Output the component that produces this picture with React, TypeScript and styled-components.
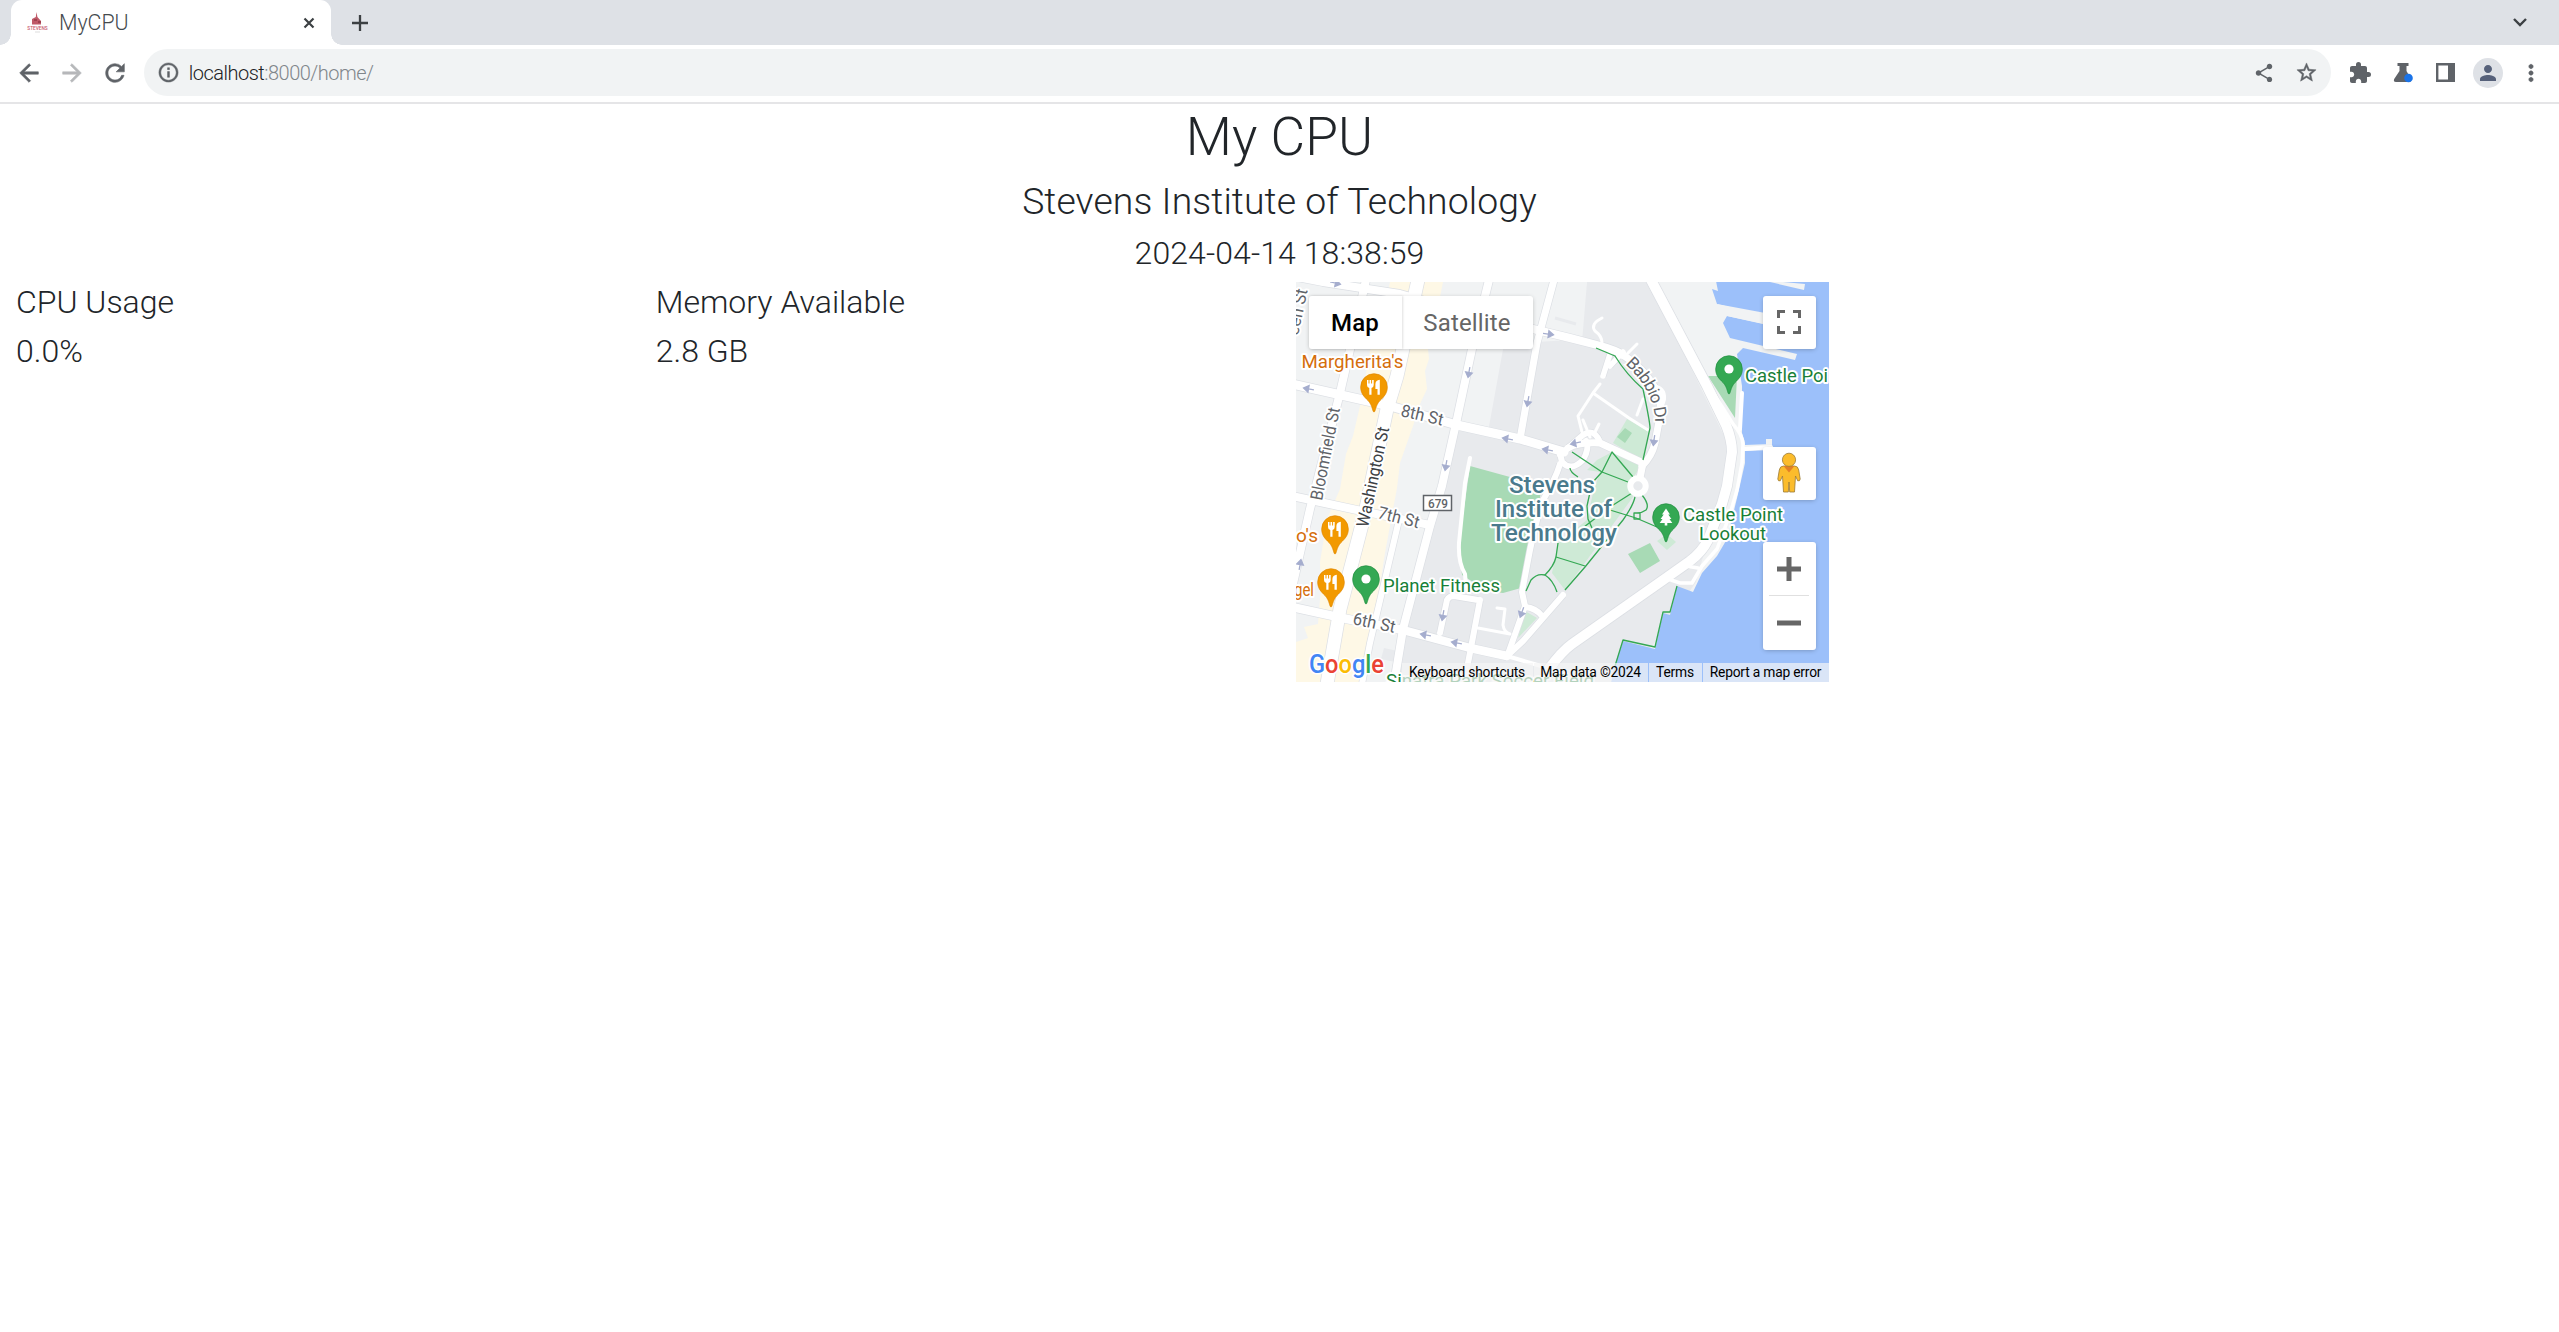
import React from "react";
import styled, { createGlobalStyle } from "styled-components";
import {
  MdArrowBack,
  MdArrowForward,
  MdRefresh,
  MdInfoOutline,
  MdShare,
  MdStarBorder,
  MdExtension,
  MdPerson,
  MdMoreVert,
} from "react-icons/md";

const GlobalStyle = createGlobalStyle`
  *, *::before, *::after { box-sizing: border-box; }
  body {
    margin: 0;
    background: #fff;
    color: #212529;
    font-family: Roboto, "Liberation Sans", sans-serif;
    font-weight: 300;
  }
`;

/* ---------- browser frame ---------- */

const Window = styled.div`
  display: flex;
  flex-direction: column;
  height: 1332px;
  overflow: hidden;
`;

const TabStrip = styled.div`
  display: flex;
  align-items: stretch;
  height: 45px;
  padding-left: 11px;
  background: #dee1e6;
  color: #3c4043;
`;

const Tab = styled.div`
  position: relative;
  display: flex;
  align-items: center;
  width: 320px;
  padding: 0 16px;
  border-radius: 11px 11px 0 0;
  background: #fff;

  &::before,
  &::after {
    content: "";
    position: absolute;
    bottom: 0;
    width: 11px;
    height: 11px;
  }
  &::before {
    left: -11px;
    background: radial-gradient(circle at 0 0, #dee1e6 10.5px, #fff 11px);
  }
  &::after {
    right: -11px;
    background: radial-gradient(circle at 100% 0, #dee1e6 10.5px, #fff 11px);
  }
`;

const TabTitle = styled.span`
  flex: 1;
  margin-left: 11px;
  font-size: 21.33px;
  line-height: 45px;
  color: #45494d;
`;

const StripButton = styled.span<{ $width: number }>`
  display: flex;
  align-items: center;
  justify-content: center;
  width: ${(p) => p.$width}px;
  color: #3c4043;
`;

const Spacer = styled.span`
  flex: 1;
`;

const Toolbar = styled.div`
  display: flex;
  align-items: center;
  height: 59px;
  padding: 0 7px 2px 8px;
  border-bottom: 2px solid #e5e5e7;
  color: #5f6368;
`;

const ToolButton = styled.span<{ $faded?: boolean; $bold?: boolean }>`
  display: flex;
  align-items: center;
  justify-content: center;
  width: 42.7px;
  flex: none;
  opacity: ${(p) => (p.$faded ? 0.45 : 1)};

  > svg path {
    stroke-width: 0;
  }
  > svg path:not([fill="none"]) {
    stroke-width: ${(p) => (p.$bold ? 0.5 : 0)};
  }
`;

const AddressBar = styled.div`
  display: flex;
  align-items: center;
  flex: 1;
  height: 47px;
  margin: 0 8px 0 8px;
  padding: 0 3px;
  border-radius: 24px;
  background: #f1f3f4;
`;

const Address = styled.span`
  flex: 1;
  margin-left: -1px;
  font-size: 20px;
  letter-spacing: -0.5px;
  color: #80868b;

  b {
    font-weight: 300;
    color: #202124;
  }
`;

const Avatar = styled.span`
  display: flex;
  align-items: center;
  justify-content: center;
  width: 30px;
  height: 30px;
  border-radius: 50%;
  background: #dee1e6;
  color: #56617a;
`;

/* ---------- page ---------- */

const Page = styled.main`
  flex: 1;
`;

const Header = styled.header`
  display: flex;
  flex-direction: column;
  align-items: center;
  padding-top: 2px;
  letter-spacing: 0.09px;
`;

const Heading = styled.h1<{ $size: number; $gap?: number }>`
  margin: 0 0 ${(p) => p.$gap ?? 10.67}px;
  font-size: ${(p) => p.$size}px;
  font-weight: 300;
  line-height: 1.2;
`;

const Columns = styled.section`
  display: grid;
  grid-template-columns: repeat(4, 1fr);
`;

const Column = styled.div`
  padding: 0 16px;
`;

/* ---------- map ---------- */

const MapFrame = styled.div`
  position: relative;
  width: 533px;
  height: 400px;
  margin-top: -1.6px;
  overflow: hidden;
  background: #f1f3f4;

  > svg {
    display: block;
  }
`;

const Control = styled.div`
  position: absolute;
  display: flex;
  background: #fff;
  border-radius: 3px;
  box-shadow: 0 1px 5px -1px rgba(0, 0, 0, 0.3);
`;

const MapTypes = styled(Control)`
  left: 13px;
  top: 14px;
  height: 53px;
`;

const MapType = styled.span<{ $active?: boolean }>`
  display: flex;
  align-items: center;
  justify-content: center;
  width: ${(p) => (p.$active ? 93 : 131)}px;
  padding-top: 2px;
  font-size: 24px;
  letter-spacing: 0.15px;
  font-weight: ${(p) => (p.$active ? 500 : 400)};
  color: ${(p) => (p.$active ? "#000" : "#666")};
  box-shadow: ${(p) => (p.$active ? "1px 0 2px rgba(0,0,0,.12)" : "none")};
`;

const SideControl = styled(Control)<{ $top: number; $height?: number }>`
  right: 13px;
  top: ${(p) => p.$top}px;
  width: 53px;
  height: ${(p) => p.$height ?? 53}px;
  flex-direction: column;
  align-items: center;
  justify-content: center;
`;

const ZoomHalf = styled.span`
  display: flex;
  flex: 1;
  align-items: center;
  justify-content: center;
`;

const Rule = styled.span`
  width: 40px;
  height: 1px;
  background: #e0e0e0;
`;

const Credits = styled.div`
  position: absolute;
  right: 0;
  bottom: 0;
  display: flex;
  gap: 1px;
  height: 19px;
`;

const Credit = styled.span<{ $width: number }>`
  display: flex;
  align-items: center;
  justify-content: center;
  width: ${(p) => p.$width}px;
  font-size: 13.8px;
  letter-spacing: -0.2px;
  font-weight: 400;
  white-space: nowrap;
  color: #000;
  background: rgba(245, 245, 245, 0.7);
`;

const GREEN = "#188038";
const ORANGE = "#d56e0c";
const EDGE = "#dcdfe4";

const roads: { d: string; w: number }[] = [
  { d: "M-4 -6 L27 0 L104 12 L150 25 L237 47 L274 56 L301 63 Q320 68 327 73", w: 8 },
  { d: "M70 -2 L44 111 L14 227 L-4 306", w: 8 },
  { d: "M-4 102 L94 124 L161 143 L224 157 L268 170", w: 9 },
  { d: "M-4 214 L61 228 L134 243", w: 8 },
  { d: "M-4 325 L51 337 L107 348 L174 366 L211 374", w: 8.5 },
  { d: "M193 -2 L176 67 L161 137 L146 204 L134 244 L107 347 L98 402", w: 8 },
  { d: "M103 238 L74 361 L66 402", w: 6 },
  { d: "M258 -2 L241 61 L224 157", w: 7 },
  { d: "M144 351 L151 318 Q153 314 158 314 L182 318 M184 318 L177 355 L168 402", w: 6 },
  { d: "M264 182 Q260 196 246 220 Q240 240 234 268 L226 310 L229 324 L212 372", w: 6 },
  { d: "M229 325 Q240 326 246 334 M267 313 L227 359 L211 374", w: 6 },
  { d: "M264 173 L287 153 Q297 146 303 158", w: 6 },
  { d: "M264 171 L266 180 Q275 190 287 178 Q294 166 290 159", w: 6 },
  { d: "M272 166 Q282 160 304 161 L347 181 L344 196", w: 7 },
  { d: "M327 73 Q350 88 360 108 Q366 118 364 134 L359 161 Q356 174 346 184", w: 7 },
  { d: "M314 72 L307 94 M314 84 L327 70", w: 5.5 },
  { d: "M354 -4 L411 104 L430 143 Q436 158 436 170 L431 204 L426 222 L412 258 Q406 270 394 279 L370 296 L276 362 Q266 369 252 388", w: 10 },
  { d: "M122 -2 L101 94 L91 127 L69 231 L44 327 L31 402", w: 13 },
];

const lanes: { d: string; w: number }[] = [
  { d: "M174 176 L169 201 L163 261 Q162 280 169 292 L170 304", w: 4 },
  { d: "M201 326 L209 327 L207 343 Q208 350 214 352 L182 346", w: 3 },
  { d: "M304 102 L297 111 L282 134 L286 150 M297 111 L333 136 L352 148 M347 117 L341 133", w: 3 },
  { d: "M306 36 Q294 42 299 49 Q306 54 306 61 M341 62 L330 73 M287 138 L294 155 M303 142 L298 152", w: 3 },
  { d: "M413 104 L437 142 Q447 153 447 163 L446 181 L441 208 L434 232 L421 267 L406 284 L396 301 L384 301 L372 297 M390 284 L402 286", w: 3.5 },
  { d: "M446 111 L444 147 M449 167 L475 165", w: 4 },
  { d: "M356 105 Q368 106 367 117 L363 130", w: 6 },
];

const footpaths = [
  "M276 170 L306 190 L332 200",
  "M337 195 L316 170 L306 190 L296 201 L291 224 L292 237 L296 246",
  "M274 186 Q274 190 282 195",
  "M336 211 L314 225 L288 245",
  "M314 228 L340 236 L361 245",
  "M339 215 Q337 224 327 238 L289 285 L269 308",
  "M262 261 L260 275 Q258 284 249 293 Q257 298 261 310",
  "M260 275 L289 284",
  "M249 293 Q241 291 235 298 L230 309",
  "M346 213 Q354 223 350 228 Q346 231 341 231 M338 231 h6 v6 h-6 z",
  "M300 66 L319 74 Q330 92 347 107 Q354 140 354 146 L347 178",
  "M381 304 L374 330 L367 330 L359 365 L327 358 L319 384",
];

const arrows: [number, number, number][] = [
  [39, 1, 12], [13, 107, 190], [252, 52, 8], [173, 90, 100], [232, 119, 100], [212, 157, 190],
  [252, 168, 190], [150, 183, 100], [280, 161, 168], [358, 158, 98], [4, 283, -80], [147, 333, 100],
  [130, 353, 190], [161, 361, 190], [226, 330, 110],
];

type Glyph = "food" | "dot" | "tree";

function Pin({ x, y, kind }: { x: number; y: number; kind: Glyph }) {
  const fill = kind === "food" ? "#f29900" : "#34a853";
  return (
    <g transform={`translate(${x} ${y})`}>
      <path
        d="M0 25 C-1.6 25 -1.2 18.5 -6 13.5 C-10.5 9.2 -13.3 6 -13.3 0 A13.3 13.3 0 0 1 13.3 0 C13.3 6 10.5 9.2 6 13.5 C1.2 18.5 1.6 25 0 25 Z"
        fill={fill}
        stroke={kind === "food" ? "#e08600" : "#1e8e3e"}
        strokeWidth=".7"
      />
      {kind === "dot" && <circle r="4.6" fill="#fff" />}
      {kind === "tree" && <path d="M0 -8.5 L4 -2.5 H2.3 L5.4 2 H3.5 L6.3 6 H1.3 V8.5 H-1.3 V6 H-6.3 L-3.5 2 H-5.4 L-2.3 -2.5 H-4 Z" fill="#fff" />}
      {kind === "food" && (
        <g fill="#fff">
          <path d="M-7 -7 h1.5 v3.5 h1 v-3.5 h1.6 v3.5 h1 v-3.5 h1.6 v5 q0 2.4 -2.2 3 v6.8 h-2.2 v-6.8 q-2.3 -.6 -2.3 -3 z" />
          <path d="M5.8 -7.3 V7.8 H3.5 V2 H1.4 V-3 Q1.6 -7 5.8 -7.3 Z" />
        </g>
      )}
    </g>
  );
}

interface LabelProps {
  x: number;
  y: number;
  width?: number;
  size?: number;
  color?: string;
  rotate?: number;
  weight?: number;
  halo?: number;
  children: React.ReactNode;
}

function Label({ x, y, width, size = 18.7, color = "#5f6368", rotate = 0, weight = 400, halo = 4, children }: LabelProps) {
  return (
    <text
      transform={`translate(${x} ${y}) rotate(${rotate})`}
      textLength={width}
      lengthAdjust="spacingAndGlyphs"
      fontSize={size}
      fontWeight={weight}
      fill={color}
      stroke="#fff"
      strokeWidth={halo}
      strokeLinejoin="round"
      paintOrder="stroke"
    >
      {children}
    </text>
  );
}

function CampusMap() {
  return (
    <svg width="533" height="400" viewBox="0 0 533 400" fontFamily="Roboto, sans-serif">
      <rect width="533" height="400" fill="#f1f3f4" />
      <path d="M291 0 L280 50 L274 58 L208 62 L192 150 L160 146 L134 246 L98 402 L330 402 L400 300 L436 170 L352 -2 Z" fill="#e8eaed" />
      <path d="M208 48 L286 60 L291 0 H258 Z" fill="#f1f3f4" />
      <path d="M259 36 L280 42" stroke="#e8eaed" strokeWidth="3" />
      <path d="M88 366 L106 370 L104 381 L85 377 Z" fill="#e8eaed" />
      <path
        d="M94 0 H147 L143 20 L132 67 L133 77 L129 89 L131 107 L124 122 L117 144 L104 181 L101 206 L89 271 L76 354 L64 402 H0 V360 L12 356 L8 345 L22 342 L25 305 L24 280 L31 237 L44 207 L50 172 L57 154 L64 124 L74 69 L90 20 Z"
        fill="#fef8e6"
      />
      <path
        d="M420 -1 L422 9 L416 7 L421 22 L467 33 V42 L431 34 L427 41 L434 56 L501 72 L499 78 L447 66 L441 72 L446 104 L446 151 L449 161 L449 181 L442 212 L431 257 L421 274 L406 291 L397 310 L381 304 L374 333 L367 331 L359 367 L327 359 L319 382 L315 401 H534 V-1 Z"
        fill="#9cc0fa"
      />
      <path d="M421 22 L480 33 L478 44 L431 34 Z M476 -1 L509 2 L508 8 L474 0 Z M449 163 L475 162 V168 L449 169 Z M470 157 h6 v10 h-6 z" fill="#f1f3f4" />

      <path d="M174 184 L214 195 L246 203 L240 240 L225 306 L207 311 L191 309 L166 293 L163 262 Z" fill="#a8dab5" />
      <path d="M331 137 L352 149 L347 179 L317 161 Z" fill="#ceead6" />
      <path d="M316 170 L346 183 L332 203 L337 215 L269 308 L256 291 L262 261 L291 238 L297 211 L304 190 L291 188 L301 178 Z" fill="#ceead6" />
      <path d="M229 329 L241 336 L222 356 Z M371 252 L380 260 L371 268 L361 259 Z" fill="#ceead6" />
      <path d="M329 146 L336 151 L329 161 L321 155 Z M332 272 L354 261 L364 279 L344 291 Z M412 94 L441 94 L439 136 Z" fill="#a8dab5" />

      <g fill="none" stroke={EDGE} strokeLinejoin="round">
        {roads.map((r) => <path key={r.d} d={r.d} strokeWidth={r.w + 1.4} />)}
      </g>
      <g fill="none" stroke="#fff" strokeLinejoin="round" strokeLinecap="round">
        {lanes.map((r) => <path key={r.d} d={r.d} strokeWidth={r.w} />)}
        {roads.map((r) => <path key={r.d} d={r.d} strokeWidth={r.w} />)}
      </g>
      <path d="M211 374 L245 384" stroke="#fff" strokeWidth="4" />
      <g fill="none" stroke="#34a853" strokeWidth="1.3" strokeLinejoin="round">
        {footpaths.map((d) => <path key={d} d={d} />)}
      </g>
      <circle cx="342" cy="204" r="7.7" fill="#e8eaed" stroke="#fff" strokeWidth="6" />

      {arrows.map(([x, y, a]) => (
        <path key={`${x}-${y}`} transform={`translate(${x} ${y}) rotate(${a})`} d="M-5 0 H2 M5.5 0 L.5 -3.3 V3.3 Z" fill="#a5adce" stroke="#a5adce" strokeWidth="1.3" />
      ))}

      <Label x={2} y={54} rotate={-78} width={47} size={17.3}>een St</Label>
      <Label x={26} y={219} rotate={-79} width={94} size={17.3}>Bloomfield St</Label>
      <Label x={72} y={246} rotate={-78} width={102} size={17.3} color="#3c4043">Washington St</Label>
      <Label x={104} y={134} rotate={13} width={43} size={17.3}>8th St</Label>
      <Label x={81} y={236} rotate={14} width={42} size={17.3}>7th St</Label>
      <Label x={56} y={342} rotate={12} width={43} size={17.3}>6th St</Label>

      <path id="babbio" d="M329 82 Q347 98 354 116 Q360 130 359 146" fill="none" />
      <text fontSize="17" fontWeight="400" fill="#5f6368" stroke="#fff" strokeWidth="3.5" paintOrder="stroke">
        <textPath href="#babbio" textLength="69">Babbio Dr</textPath>
      </text>

      <rect x="127.500" y="213.500" width="28" height="15" fill="#fff" stroke="#5f6368" strokeWidth="1.5" />
      <Label x={132} y={226} width={20} size={13} halo={0} weight={500}>679</Label>

      <Pin x={78} y={105} kind="food" />
      <Pin x={39} y={247} kind="food" />
      <Pin x={35} y={300} kind="food" />
      <Pin x={70} y={297} kind="dot" />
      <Pin x={433} y={87} kind="dot" />
      <Pin x={370} y={235} kind="tree" />

      <Label x={5.500} y={86} width={102} color={ORANGE}>Margherita's</Label>
      <Label x={0} y={260} width={22} color={ORANGE}>o's</Label>
      <Label x={-2} y={314} width={20} color={ORANGE}>gel</Label>
      <Label x={87} y={310} width={117} color={GREEN}>Planet Fitness</Label>
      <Label x={449} y={100} width={83} color={GREEN}>Castle Poi</Label>
      <Label x={387} y={239} width={100} color={GREEN}>Castle Point</Label>
      <Label x={403} y={258} width={67} color={GREEN}>Lookout</Label>
      <Label x={90} y={405} width={208} color={GREEN}>Sinatra Park Soccer Field</Label>

      <g>
        <Label x={213} y={211} width={86} size={24} weight={500} color="#4a7a8c">Stevens</Label>
        <Label x={199} y={235} width={117} size={24} weight={500} color="#4a7a8c">Institute of</Label>
        <Label x={195} y={259} width={126} size={24} weight={500} color="#4a7a8c">Technology</Label>
      </g>

      <Label x={13} y={391} width={75} size={26} weight={500} halo={3}>
        <tspan fill="#4285f4">G</tspan>
        <tspan fill="#ea4335">o</tspan>
        <tspan fill="#fbbc04">o</tspan>
        <tspan fill="#4285f4">g</tspan>
        <tspan fill="#34a853">l</tspan>
        <tspan fill="#ea4335">e</tspan>
      </Label>
    </svg>
  );
}

function Pegman() {
  return (
    <svg width="24" height="42" viewBox="0 0 24 42">
      <path
        d="M6.500 14 Q3 14 2.300 18 L.8 27 Q1 29.500 3.300 28.800 L5.500 24 L6.500 40 H11.300 L12 30 L12.700 40 H17.500 L18.500 24 L20.700 28.800 Q23 29.500 23.200 27 L21.700 18 Q21 14 17.500 14 Z"
        fill="#fbbc2c"
        stroke="#9b7a35"
        strokeWidth=".8"
      />
      <path d="M6.500 14 H17.500 L12 20.500 Z" fill="#e37f26" />
      <circle cx="12" cy="7.800" r="6.600" fill="#fbbc2c" stroke="#9b7a35" strokeWidth=".8" />
    </svg>
  );
}

function Favicon() {
  return (
    <svg width="21" height="22" viewBox="0 0 21 22" overflow="visible">
      <path d="M9.500 0 L10.400 5 L14 9 V12.500 H5 V7 L8.800 5 Z" fill="#c05a68" />
      <path d="M7 8 h3 M11 10 h3" stroke="#7d2a38" strokeWidth="1.2" />
      <text x="0.3" y="18" textLength="20.4" lengthAdjust="spacingAndGlyphs" fontSize="5.5" fontWeight="500" fill="#c9606f">STEVENS</text>
      <path d="M8 20 H13" stroke="#ddd" strokeWidth="1" />
    </svg>
  );
}

export default function App() {
  return (
    <Window>
      <GlobalStyle />
      <TabStrip>
        <Tab>
          <Favicon />
          <TabTitle>MyCPU</TabTitle>
          <svg width="12" height="12" viewBox="0 0 12 12" stroke="#3c4043" strokeWidth="2.2">
            <path d="M1.500 1.500 L10.500 10.500 M10.500 1.500 L1.500 10.500" />
          </svg>
        </Tab>
        <StripButton $width={58}>
          <svg width="16" height="16" viewBox="0 0 16 16" stroke="currentColor" strokeWidth="2.300">
            <path d="M8 0 V16 M0 8 H16" />
          </svg>
        </StripButton>
        <Spacer />
        <StripButton $width={78}>
          <svg width="14" height="9" viewBox="0 0 14 9" fill="none" stroke="currentColor" strokeWidth="2.400">
            <path d="M1 1 L7 7 L13 1" />
          </svg>
        </StripButton>
      </TabStrip>

      <Toolbar>
        <ToolButton $bold><MdArrowBack size={28} /></ToolButton>
        <ToolButton $bold $faded><MdArrowForward size={28} /></ToolButton>
        <ToolButton $bold><MdRefresh size={28} /></ToolButton>
        <AddressBar>
          <ToolButton $bold><MdInfoOutline size={23} /></ToolButton>
          <Address><b>localhost</b>:8000/home/</Address>
          <ToolButton><MdShare size={22} /></ToolButton>
          <ToolButton $bold><MdStarBorder size={23} /></ToolButton>
        </AddressBar>
        <ToolButton><MdExtension size={24} /></ToolButton>
        <ToolButton>
          <svg width="20" height="20" viewBox="0 0 20 20">
            <path d="M4.500 0 H15.500 V3 H13.500 V8 L18 16 Q19 19 16 19 H3 Q0 19 1.200 16 L6.500 8 V3 H4.500 Z" fill="#5f6368" />
            <circle cx="15.500" cy="15" r="4.300" fill="#1a73e8" />
          </svg>
        </ToolButton>
        <ToolButton>
          <svg width="19" height="19" viewBox="0 0 19 19">
            <path d="M0 0 H19 V19 H0 Z M2.400 2.400 V16.600 H12 V2.400 Z" fill="#5f6368" fillRule="evenodd" />
          </svg>
        </ToolButton>
        <ToolButton><Avatar><MdPerson size={24} /></Avatar></ToolButton>
        <ToolButton $bold><MdMoreVert size={26} /></ToolButton>
      </Toolbar>

      <Page>
        <Header>
          <Heading $size={53.33} $gap={9}>My CPU</Heading>
          <Heading as="h3" $size={37.33}>Stevens Institute of Technology</Heading>
          <Heading as="h4" $size={32}>2024-04-14 18:38:59</Heading>
        </Header>
        <Columns>
          <Column>
            <Heading as="h4" $size={32} $gap={10}>CPU Usage</Heading>
            <Heading as="h4" $size={32}>0.0%</Heading>
          </Column>
          <Column>
            <Heading as="h4" $size={32} $gap={10}>Memory Available</Heading>
            <Heading as="h4" $size={32}>2.8 GB</Heading>
          </Column>
          <Column>
            <MapFrame>
              <CampusMap />
              <MapTypes>
                <MapType $active>Map</MapType>
                <MapType>Satellite</MapType>
              </MapTypes>
              <SideControl $top={14}>
                <svg width="24" height="24" viewBox="0 0 24 24" fill="none" stroke="#666" strokeWidth="3">
                  <path d="M1.500 8 V1.500 H8 M16 1.500 H22.500 V8 M22.500 16 V22.500 H16 M8 22.500 H1.500 V16" />
                </svg>
              </SideControl>
              <SideControl $top={165}>
                <Pegman />
              </SideControl>
              <SideControl $top={260} $height={108}>
                <ZoomHalf>
                  <svg width="24" height="24" viewBox="0 0 24 24" stroke="#666" strokeWidth="5">
                    <path d="M12 0 V24 M0 12 H24" />
                  </svg>
                </ZoomHalf>
                <Rule />
                <ZoomHalf>
                  <svg width="24" height="24" viewBox="0 0 24 24" stroke="#666" strokeWidth="5">
                    <path d="M0 12 H24" />
                  </svg>
                </ZoomHalf>
              </SideControl>
              <Credits>
                <Credit $width={131}>Keyboard shortcuts</Credit>
                <Credit $width={114}>Map data ©2024</Credit>
                <Credit $width={53}>Terms</Credit>
                <Credit $width={126}>Report a map error</Credit>
              </Credits>
            </MapFrame>
          </Column>
        </Columns>
      </Page>
    </Window>
  );
}
